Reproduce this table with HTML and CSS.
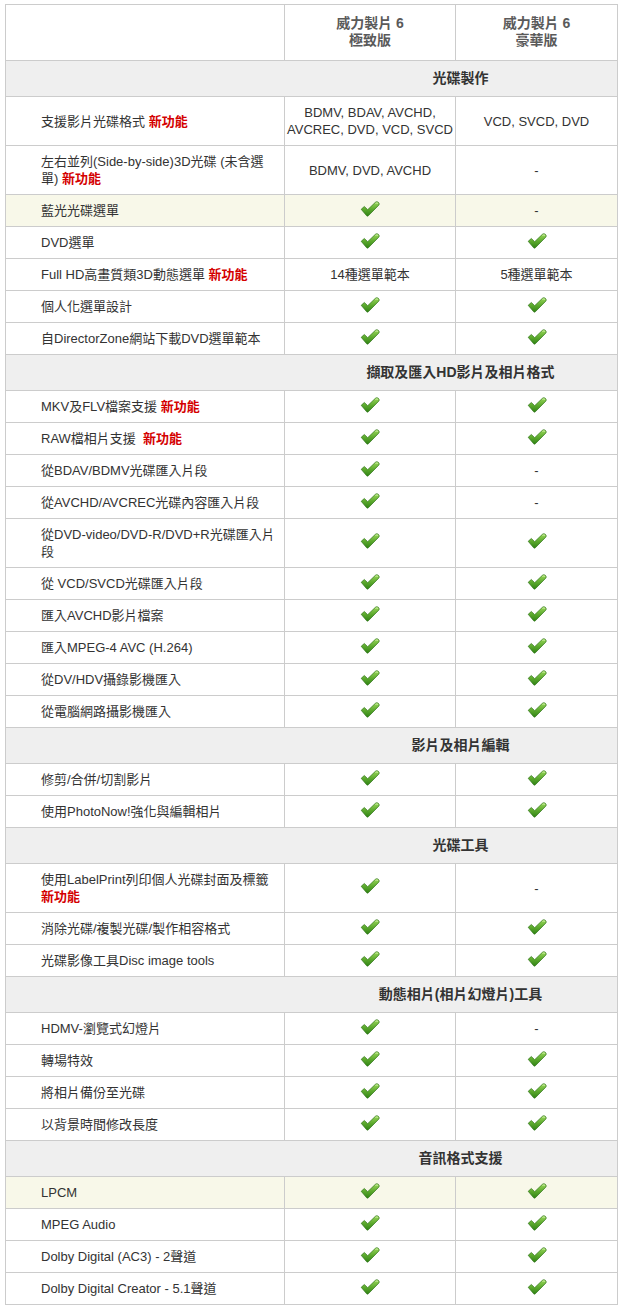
FILE: index.html
```html
<!DOCTYPE html>
<html lang="zh-Hant">
<head>
<meta charset="utf-8">
<title>威力製片 6 版本比較</title>
<link rel="stylesheet" href="styles.css">
</head>
<body>
<svg class="defs" width="0" height="0" aria-hidden="true">
  <defs>
    <linearGradient id="g" x1="0" y1="0" x2="0" y2="1">
      <stop offset="0" stop-color="#9ad85a"/>
      <stop offset="0.55" stop-color="#5aa82c"/>
      <stop offset="1" stop-color="#2f8214"/>
    </linearGradient>
    <symbol id="chk" viewBox="0 0 20 16">
      <path d="M1.2 8.3 L4.3 5.5 L7.7 8.7 L15.4 1.3 Q16.9 0.1 18.2 1.2 L18.9 2 Q19.7 3.1 18.7 4.2 L8.3 14.8 Q7.5 15.6 6.7 14.8 Z" fill="url(#g)" stroke="#2a7012" stroke-width="0.7" stroke-linejoin="round"/>
      <path d="M15.8 2.2 Q17 1.3 17.9 2.2" fill="none" stroke="#d8f5b0" stroke-width="0.9" stroke-linecap="round"/>
    </symbol>
  </defs>
</svg>

<div class="table">
  <div class="c head"></div>
  <div class="c head"><span>威力製片 6<br>極致版</span></div>
  <div class="c head"><span>威力製片 6<br>豪華版</span></div>

  <div class="sec">光碟製作</div>

  <div class="c name"><span>支援影片光碟格式 <b class="new">新功能</b></span></div>
  <div class="c"><span>BDMV, BDAV, AVCHD, AVCREC, DVD, VCD, SVCD</span></div>
  <div class="c"><span>VCD, SVCD, DVD</span></div>

  <div class="c name"><span>左右並列(Side-by-side)3D光碟 (未含選單) <b class="new">新功能</b></span></div>
  <div class="c"><span>BDMV, DVD, AVCHD</span></div>
  <div class="c"><span>-</span></div>

  <div class="c name hl"><span>藍光光碟選單</span></div>
  <div class="c hl"><svg class="ok"><use href="#chk"/></svg></div>
  <div class="c hl"><span>-</span></div>

  <div class="c name"><span>DVD選單</span></div>
  <div class="c"><svg class="ok"><use href="#chk"/></svg></div>
  <div class="c"><svg class="ok"><use href="#chk"/></svg></div>

  <div class="c name"><span>Full HD高畫質類3D動態選單 <b class="new">新功能</b></span></div>
  <div class="c"><span>14種選單範本</span></div>
  <div class="c"><span>5種選單範本</span></div>

  <div class="c name"><span>個人化選單設計</span></div>
  <div class="c"><svg class="ok"><use href="#chk"/></svg></div>
  <div class="c"><svg class="ok"><use href="#chk"/></svg></div>

  <div class="c name"><span>自DirectorZone網站下載DVD選單範本</span></div>
  <div class="c"><svg class="ok"><use href="#chk"/></svg></div>
  <div class="c"><svg class="ok"><use href="#chk"/></svg></div>

  <div class="sec">擷取及匯入HD影片及相片格式</div>

  <div class="c name"><span>MKV及FLV檔案支援 <b class="new">新功能</b></span></div>
  <div class="c"><svg class="ok"><use href="#chk"/></svg></div>
  <div class="c"><svg class="ok"><use href="#chk"/></svg></div>

  <div class="c name"><span>RAW檔相片支援&nbsp; <b class="new">新功能</b></span></div>
  <div class="c"><svg class="ok"><use href="#chk"/></svg></div>
  <div class="c"><svg class="ok"><use href="#chk"/></svg></div>

  <div class="c name"><span>從BDAV/BDMV光碟匯入片段</span></div>
  <div class="c"><svg class="ok"><use href="#chk"/></svg></div>
  <div class="c"><span>-</span></div>

  <div class="c name"><span>從AVCHD/AVCREC光碟內容匯入片段</span></div>
  <div class="c"><svg class="ok"><use href="#chk"/></svg></div>
  <div class="c"><span>-</span></div>

  <div class="c name"><span>從DVD-video/DVD-R/DVD+R光碟匯入片段</span></div>
  <div class="c"><svg class="ok"><use href="#chk"/></svg></div>
  <div class="c"><svg class="ok"><use href="#chk"/></svg></div>

  <div class="c name"><span>從 VCD/SVCD光碟匯入片段</span></div>
  <div class="c"><svg class="ok"><use href="#chk"/></svg></div>
  <div class="c"><svg class="ok"><use href="#chk"/></svg></div>

  <div class="c name"><span>匯入AVCHD影片檔案</span></div>
  <div class="c"><svg class="ok"><use href="#chk"/></svg></div>
  <div class="c"><svg class="ok"><use href="#chk"/></svg></div>

  <div class="c name"><span>匯入MPEG-4 AVC (H.264)</span></div>
  <div class="c"><svg class="ok"><use href="#chk"/></svg></div>
  <div class="c"><svg class="ok"><use href="#chk"/></svg></div>

  <div class="c name"><span>從DV/HDV攝錄影機匯入</span></div>
  <div class="c"><svg class="ok"><use href="#chk"/></svg></div>
  <div class="c"><svg class="ok"><use href="#chk"/></svg></div>

  <div class="c name"><span>從電腦網路攝影機匯入</span></div>
  <div class="c"><svg class="ok"><use href="#chk"/></svg></div>
  <div class="c"><svg class="ok"><use href="#chk"/></svg></div>

  <div class="sec">影片及相片編輯</div>

  <div class="c name"><span>修剪/合併/切割影片</span></div>
  <div class="c"><svg class="ok"><use href="#chk"/></svg></div>
  <div class="c"><svg class="ok"><use href="#chk"/></svg></div>

  <div class="c name"><span>使用PhotoNow!強化與編輯相片</span></div>
  <div class="c"><svg class="ok"><use href="#chk"/></svg></div>
  <div class="c"><svg class="ok"><use href="#chk"/></svg></div>

  <div class="sec">光碟工具</div>

  <div class="c name"><span>使用LabelPrint列印個人光碟封面及標籤 <b class="new">新功能</b></span></div>
  <div class="c"><svg class="ok"><use href="#chk"/></svg></div>
  <div class="c"><span>-</span></div>

  <div class="c name"><span>消除光碟/複製光碟/製作相容格式</span></div>
  <div class="c"><svg class="ok"><use href="#chk"/></svg></div>
  <div class="c"><svg class="ok"><use href="#chk"/></svg></div>

  <div class="c name"><span>光碟影像工具Disc image tools</span></div>
  <div class="c"><svg class="ok"><use href="#chk"/></svg></div>
  <div class="c"><svg class="ok"><use href="#chk"/></svg></div>

  <div class="sec">動態相片(相片幻燈片)工具</div>

  <div class="c name"><span>HDMV-瀏覽式幻燈片</span></div>
  <div class="c"><svg class="ok"><use href="#chk"/></svg></div>
  <div class="c"><span>-</span></div>

  <div class="c name"><span>轉場特效</span></div>
  <div class="c"><svg class="ok"><use href="#chk"/></svg></div>
  <div class="c"><svg class="ok"><use href="#chk"/></svg></div>

  <div class="c name"><span>將相片備份至光碟</span></div>
  <div class="c"><svg class="ok"><use href="#chk"/></svg></div>
  <div class="c"><svg class="ok"><use href="#chk"/></svg></div>

  <div class="c name"><span>以背景時間修改長度</span></div>
  <div class="c"><svg class="ok"><use href="#chk"/></svg></div>
  <div class="c"><svg class="ok"><use href="#chk"/></svg></div>

  <div class="sec">音訊格式支援</div>

  <div class="c name hl"><span>LPCM</span></div>
  <div class="c hl"><svg class="ok"><use href="#chk"/></svg></div>
  <div class="c hl"><svg class="ok"><use href="#chk"/></svg></div>

  <div class="c name"><span>MPEG Audio</span></div>
  <div class="c"><svg class="ok"><use href="#chk"/></svg></div>
  <div class="c"><svg class="ok"><use href="#chk"/></svg></div>

  <div class="c name"><span>Dolby Digital (AC3) - 2聲道</span></div>
  <div class="c"><svg class="ok"><use href="#chk"/></svg></div>
  <div class="c"><svg class="ok"><use href="#chk"/></svg></div>

  <div class="c name"><span>Dolby Digital Creator - 5.1聲道</span></div>
  <div class="c"><svg class="ok"><use href="#chk"/></svg></div>
  <div class="c"><svg class="ok"><use href="#chk"/></svg></div>
</div>
</body>
</html>
```
FILE: styles.css
```css
html, body {
  margin: 0;
  padding: 0;
  background: #ffffff;
}

body {
  font-family: "Liberation Sans", Arial, "Noto Sans CJK TC", sans-serif;
  font-size: 13px;
  color: #333333;
}

.defs {
  position: absolute;
  width: 0;
  height: 0;
  overflow: hidden;
}

.table {
  display: grid;
  grid-template-columns: 279px 171px 162px;
  width: max-content;
  margin: 4px 0 0 5px;
  border-left: 1px solid #cccccc;
  border-top: 1px solid #cccccc;
}

.c {
  box-sizing: border-box;
  display: flex;
  align-items: center;
  justify-content: center;
  text-align: center;
  padding: 7px 1px;
  line-height: 17px;
  border-right: 1px solid #cccccc;
  border-bottom: 1px solid #cccccc;
  background: #ffffff;
}

.c.name {
  justify-content: flex-start;
  text-align: left;
  padding-left: 35px;
  padding-right: 9px;
}

.c.head {
  padding: 10px 1px 11px;
  font-size: 14px;
  font-weight: bold;
  color: #5a5a5a;
}

.c.hl {
  background: #f8f8e9;
}

.sec {
  grid-column: 1 / -1;
  box-sizing: border-box;
  padding: 9px 0 9px 298px;
  line-height: 17px;
  text-align: center;
  font-size: 14px;
  font-weight: bold;
  color: #333333;
  background: #efefef;
  border-right: 1px solid #cccccc;
  border-bottom: 1px solid #cccccc;
}

.new {
  color: #d40000;
  font-weight: bold;
}

.ok {
  width: 20px;
  height: 16px;
  margin-top: -4px;
  display: block;
}
```
